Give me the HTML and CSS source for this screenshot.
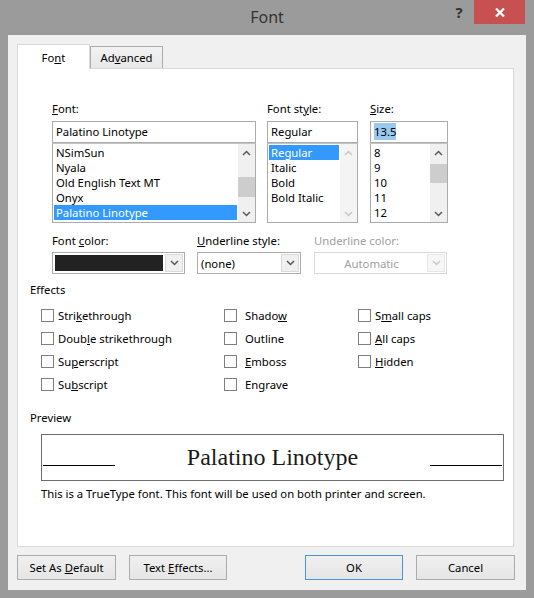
FILE: index.html
```html
<!DOCTYPE html>
<html>
<head>
<meta charset="utf-8">
<link rel="stylesheet" href="styles.css">
</head>
<body>
<div class="window">
  <div class="titlebar">
    <div class="title">Font</div>
    <div class="controls">
      <div class="help">?</div>
      <div class="close">
        <svg width="10" height="9" viewBox="0 0 10 9"><path d="M1 0.5 L9 8.5 M9 0.5 L1 8.5" stroke="#fff" stroke-width="2.2" fill="none"/></svg>
      </div>
    </div>
  </div>
  <div class="client">
    <div class="tabs">
      <div class="tab active">Fo<u>n</u>t</div>
      <div class="tab">Ad<u>v</u>anced</div>
    </div>
    <div class="panel">
      <div class="font-row">
        <div class="col col-font">
          <div class="label"><u>F</u>ont:</div>
          <div class="textbox">Palatino Linotype</div>
          <div class="list">
            <div class="items">
              <div class="item">NSimSun</div>
              <div class="item">Nyala</div>
              <div class="item">Old English Text MT</div>
              <div class="item">Onyx</div>
              <div class="item sel">Palatino Linotype</div>
            </div>
            <div class="scrollbar">
              <div class="arrow"><svg width="9" height="6" viewBox="0 0 9 6"><path d="M1 5 L4.5 1.5 L8 5" stroke="#5a5a5a" stroke-width="1.5" fill="none"/></svg></div>
              <div class="track"><div class="thumb thumb-font"></div></div>
              <div class="arrow"><svg width="9" height="6" viewBox="0 0 9 6"><path d="M1 1 L4.5 4.5 L8 1" stroke="#5a5a5a" stroke-width="1.5" fill="none"/></svg></div>
            </div>
          </div>
        </div>
        <div class="col col-style">
          <div class="label">Font st<u>y</u>le:</div>
          <div class="textbox">Regular</div>
          <div class="list">
            <div class="items">
              <div class="item sel">Regular</div>
              <div class="item">Italic</div>
              <div class="item">Bold</div>
              <div class="item">Bold Italic</div>
            </div>
            <div class="scrollbar disabled">
              <div class="arrow"><svg width="9" height="6" viewBox="0 0 9 6"><path d="M1 5 L4.5 1.5 L8 5" stroke="#c8c8c8" stroke-width="1.5" fill="none"/></svg></div>
              <div class="track"></div>
              <div class="arrow"><svg width="9" height="6" viewBox="0 0 9 6"><path d="M1 1 L4.5 4.5 L8 1" stroke="#c8c8c8" stroke-width="1.5" fill="none"/></svg></div>
            </div>
          </div>
        </div>
        <div class="col col-size">
          <div class="label"><u>S</u>ize:</div>
          <div class="textbox"><span class="hl">13.5</span></div>
          <div class="list">
            <div class="items">
              <div class="item">8</div>
              <div class="item">9</div>
              <div class="item">10</div>
              <div class="item">11</div>
              <div class="item">12</div>
            </div>
            <div class="scrollbar">
              <div class="arrow"><svg width="9" height="6" viewBox="0 0 9 6"><path d="M1 5 L4.5 1.5 L8 5" stroke="#5a5a5a" stroke-width="1.5" fill="none"/></svg></div>
              <div class="track"><div class="thumb thumb-size"></div></div>
              <div class="arrow"><svg width="9" height="6" viewBox="0 0 9 6"><path d="M1 1 L4.5 4.5 L8 1" stroke="#5a5a5a" stroke-width="1.5" fill="none"/></svg></div>
            </div>
          </div>
        </div>
      </div>

      <div class="combo-row">
        <div class="ccol ccol-color">
          <div class="label2">Font <u>c</u>olor:</div>
          <div class="combo">
            <div class="swatch"></div>
            <div class="dropbtn"><svg width="9" height="6" viewBox="0 0 9 6"><path d="M1 1 L4.5 4.5 L8 1" stroke="#555" stroke-width="1.5" fill="none"/></svg></div>
          </div>
        </div>
        <div class="ccol ccol-uline">
          <div class="label2"><u>U</u>nderline style:</div>
          <div class="combo">
            <div class="ctext">(none)</div>
            <div class="dropbtn"><svg width="9" height="6" viewBox="0 0 9 6"><path d="M1 1 L4.5 4.5 L8 1" stroke="#555" stroke-width="1.5" fill="none"/></svg></div>
          </div>
        </div>
        <div class="ccol ccol-ucolor">
          <div class="label2 dis">Underline color:</div>
          <div class="combo disabled">
            <div class="ctext center">Automatic</div>
            <div class="dropbtn"><svg width="9" height="6" viewBox="0 0 9 6"><path d="M1 1 L4.5 4.5 L8 1" stroke="#c8c8c8" stroke-width="1.5" fill="none"/></svg></div>
          </div>
        </div>
      </div>

      <div class="group-label effects-label">Effects</div>
      <div class="effects">
        <div class="check"><span class="box"></span><span>Stri<u>k</u>ethrough</span></div>
        <div class="check"><span class="box"></span><span>Doub<u>l</u>e strikethrough</span></div>
        <div class="check"><span class="box"></span><span>Su<u>p</u>erscript</span></div>
        <div class="check"><span class="box"></span><span>Su<u>b</u>script</span></div>
        <div class="check wide"><span class="box"></span><span>Shado<u>w</u></span></div>
        <div class="check wide"><span class="box"></span><span>Outline</span></div>
        <div class="check wide"><span class="box"></span><span><u>E</u>mboss</span></div>
        <div class="check wide"><span class="box"></span><span>En<u>g</u>rave</span></div>
        <div class="check"><span class="box"></span><span>S<u>m</u>all caps</span></div>
        <div class="check"><span class="box"></span><span><u>A</u>ll caps</span></div>
        <div class="check"><span class="box"></span><span><u>H</u>idden</span></div>
      </div>

      <div class="group-label preview-label">Preview</div>
      <div class="preview">
        <div class="pline"></div>
        <div class="ptext">Palatino Linotype</div>
        <div class="pline"></div>
      </div>
      <div class="caption">This is a TrueType font. This font will be used on both printer and screen.</div>
    </div>

    <div class="buttons">
      <div class="btn w99">Set As <u>D</u>efault</div>
      <div class="btn w98 gap">Text <u>E</u>ffects...</div>
      <div class="spacer"></div>
      <div class="btn w98 default">OK</div>
      <div class="btn w99 gap">Cancel</div>
    </div>
  </div>
</div>
</body>
</html>
```

FILE: styles.css
```css
* { box-sizing: border-box; }
html, body { margin: 0; padding: 0; }
body {
  width: 534px;
  height: 598px;
  overflow: hidden;
  background: #9b9b9b;
  font-family: "Noto Sans", "Open Sans", sans-serif;
  font-size: 11.3px;
  color: #000;
}
u { text-decoration-thickness: 1px; text-underline-offset: 1px; }

.window {
  width: 534px;
  height: 598px;
  display: flex;
  flex-direction: column;
}

/* Title bar */
.titlebar {
  height: 35px;
  flex: none;
  display: grid;
  grid-template-columns: 1fr auto 1fr;
}
.title {
  grid-column: 2;
  font-size: 16px;
  line-height: 35px;
  color: #333;
}
.controls {
  grid-column: 3;
  justify-self: end;
  display: flex;
  align-items: flex-start;
}
.help {
  width: 30px;
  height: 24px;
  line-height: 24px;
  text-align: center;
  font-size: 15px;
  font-weight: bold;
  color: #333;
}
.close {
  width: 51px;
  height: 24px;
  margin-right: 9px;
  background: #c75050;
  display: flex;
  align-items: center;
  justify-content: center;
}

/* Client area */
.client {
  height: 555px;
  margin: 0 8px;
  background: #f0f0f0;
  padding: 9px 12px 0 9px;
  display: flex;
  flex-direction: column;
}

.tabs {
  display: flex;
  align-items: flex-end;
  height: 25px;
  margin-bottom: -1px;
  position: relative;
  z-index: 1;
}
.tab {
  width: 73px;
  height: 22px;
  margin-bottom: 1px;
  border: 1px solid #acacac;
  border-bottom: none;
  background: linear-gradient(#f2f2f2, #e8e8e8);
  text-align: center;
  line-height: 21px;
}
.tab.active {
  height: 25px;
  margin-bottom: 0;
  background: #fff;
  border-color: #d9d9d9;
  line-height: 25px;
}

.panel {
  height: 479px;
  background: #fff;
  border: 1px solid #d9d9d9;
  padding: 32px 0 0 12px;
  flex: none;
}

/* top row: lists */
.font-row {
  display: flex;
  margin-left: 22px;
}
.col { display: flex; flex-direction: column; }
.col-font { width: 204px; margin-right: 11px; }
.col-style { width: 91px; margin-right: 12px; }
.col-size { width: 78px; }

.label {
  height: 15px;
  line-height: 15px;
  margin-bottom: 5px;
  white-space: nowrap;
}
.textbox {
  height: 22px;
  border: 1px solid #ababab;
  padding: 0 3px;
  line-height: 20px;
  white-space: nowrap;
}
.hl { background: #99c9ef; padding: 1px 0; }

.list {
  height: 80px;
  border: 1px solid #ababab;
  border-top-color: #c4c4c4;
  display: flex;
}
.items {
  flex: 1;
  padding: 1px 1px 0 1px;
  overflow: hidden;
}
.item {
  height: 15px;
  line-height: 15px;
  padding-left: 2px;
  white-space: nowrap;
}
.item.sel { background: #3399ff; color: #fff; }

.scrollbar {
  width: 17px;
  flex: none;
  background: #f0f0f0;
  display: flex;
  flex-direction: column;
}
.scrollbar.disabled { background: #f4f4f4; }
.arrow {
  height: 17px;
  display: flex;
  align-items: center;
  justify-content: center;
}
.track { flex: 1; display: flex; flex-direction: column; align-items: center; }
.thumb { width: 17px; background: #cdcdcd; }
.thumb-font { margin-top: 16px; height: 20px; }
.thumb-size { margin-top: 3px; height: 19px; }

/* second row: combos */
.combo-row {
  display: flex;
  margin-left: 22px;
  margin-top: 10px;
}
.ccol { display: flex; flex-direction: column; }
.ccol-color { width: 133px; margin-right: 12px; }
.ccol-uline { width: 104px; margin-right: 13px; }
.ccol-ucolor { width: 133px; }
.label2 {
  height: 15px;
  line-height: 15px;
  margin-bottom: 4px;
  white-space: nowrap;
}
.label2.dis { color: #a0a0a0; }
.combo {
  height: 22px;
  border: 1px solid #acacac;
  background: #fff;
  display: flex;
  align-items: center;
  padding: 1px;
}
.combo.disabled { border-color: #d9d9d9; }
.swatch {
  width: 108px;
  height: 16px;
  margin-left: 1px;
  background: #222;
}
.ctext {
  flex: 1;
  padding-left: 2px;
  white-space: nowrap;
}
.ctext.center { text-align: center; color: #a0a0a0; padding-left: 0; }
.dropbtn {
  width: 18px;
  height: 18px;
  margin-left: auto;
  border: 1px solid #dadada;
  background: #f0f0f0;
  display: flex;
  align-items: center;
  justify-content: center;
}
.combo.disabled .dropbtn { border-color: #e6e6e6; background: #f6f6f6; }

/* group labels */
.group-label {
  height: 15px;
  line-height: 15px;
}
.effects-label { margin-top: 8px; }
.preview-label { margin-top: 14px; }

/* effects */
.effects {
  margin-top: 7px;
  margin-left: 11px;
  display: grid;
  grid-template-columns: 183px 134px auto;
  grid-template-rows: repeat(4, 23px);
  grid-auto-flow: column;
}
.check {
  display: flex;
  align-items: center;
  gap: 4px;
  white-space: nowrap;
}
.check.wide { gap: 8px; }
.box {
  width: 13px;
  height: 13px;
  border: 1px solid #7f7f7f;
  background: #fff;
  flex: none;
}

/* preview */
.preview {
  margin-top: 9px;
  margin-left: 11px;
  width: 463px;
  height: 47px;
  border: 1px solid #6d6d6d;
  display: flex;
  align-items: flex-start;
  justify-content: space-between;
  padding: 0 1px;
}
.pline {
  width: 72px;
  height: 1px;
  background: #000;
  margin-top: 30px;
}
.ptext {
  font-family: "Liberation Serif", serif;
  font-size: 24px;
  line-height: 24px;
  margin-top: 10px;
  color: #1a1a1a;
}
.caption {
  margin-top: 5px;
  margin-left: 11px;
  line-height: 15px;
  white-space: nowrap;
}

/* buttons */
.buttons {
  margin-top: 8px;
  display: flex;
  margin-right: -1px;
}
.spacer { flex: 1; }
.btn {
  height: 25px;
  border: 1px solid #acacac;
  background: linear-gradient(#f0f0f0, #e5e5e5);
  text-align: center;
  line-height: 23px;
  white-space: nowrap;
}
.btn.w99 { width: 99px; }
.btn.w98 { width: 98px; }
.btn.gap { margin-left: 13px; }
.btn.default { border-color: #4a94d8; }
```
